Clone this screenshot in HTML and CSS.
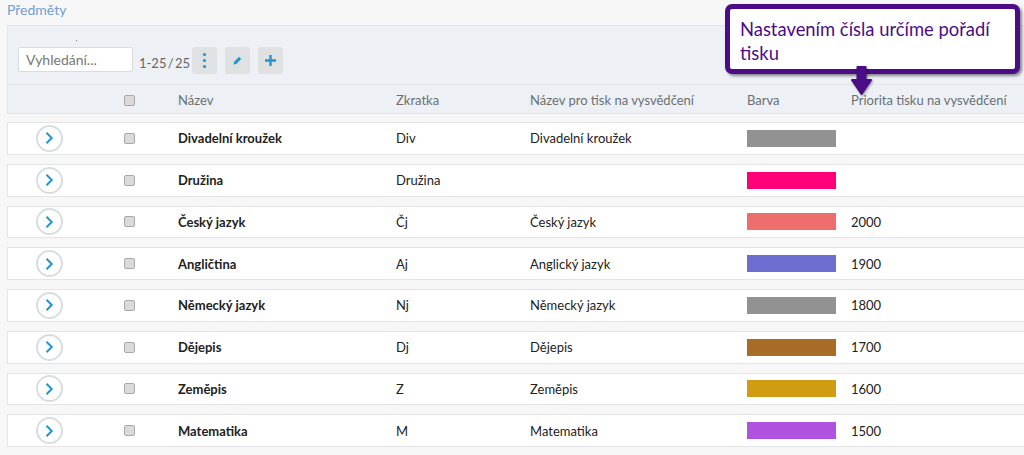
FILE: index.html
```html
<!DOCTYPE html>
<html lang="cs">
<head>
<meta charset="utf-8">
<title>Předměty</title>
<link rel="stylesheet" href="styles.css">
</head>
<body>
<main class="page">
  <h1 class="title">Předměty</h1>
  <section class="panel">
    <div class="toolbar">
      <span class="dot"></span>
      <div class="tools">
        <input class="search" type="text" placeholder="Vyhledání...">
        <span class="count">1-25 / 25</span>
        <button class="tool" aria-label="Menu"><svg width="25" height="27" viewBox="0 0 25 27"><g fill="#2196d3"><circle cx="12.500" cy="7.500" r="1.600"/><circle cx="12.500" cy="13.500" r="1.600"/><circle cx="12.500" cy="19.500" r="1.600"/></g></svg></button>
        <button class="tool" aria-label="Upravit"><svg width="25" height="27" viewBox="0 0 25 27"><path d="M8.500 17.500l.6-2.700 5-5 2.100 2.100-5 5z" fill="#2196d3"/></svg></button>
        <button class="tool" aria-label="Přidat"><svg width="25" height="27" viewBox="0 0 25 27"><path d="M12.500 8v11M7 13.500h11" stroke="#2196d3" stroke-width="2.400" fill="none"/></svg></button>
      </div>
    </div>
    <div class="cols head">
      <span></span>
      <span><input class="check" type="checkbox"></span>
      <span>Název</span>
      <span>Zkratka</span>
      <span>Název pro tisk na vysvědčení</span>
      <span>Barva</span>
      <span>Priorita tisku na vysvědčení</span>
    </div>
  </section>
  <div class="rows">
    <div class="cols row"><span><button class="open" aria-label="Otevřít"><svg width="12" height="14" viewBox="0 0 12 14"><path d="M3.500 1.800L8.700 7l-5.200 5.200" fill="none" stroke="#2196d3" stroke-width="2"/></svg></button></span><span><input class="check" type="checkbox"></span><b>Divadelní kroužek</b><span>Div</span><span>Divadelní kroužek</span><span class="swatch c1"></span><span></span></div>
    <div class="cols row"><span><button class="open" aria-label="Otevřít"><svg width="12" height="14" viewBox="0 0 12 14"><path d="M3.500 1.800L8.700 7l-5.200 5.200" fill="none" stroke="#2196d3" stroke-width="2"/></svg></button></span><span><input class="check" type="checkbox"></span><b>Družina</b><span>Družina</span><span></span><span class="swatch c2"></span><span></span></div>
    <div class="cols row"><span><button class="open" aria-label="Otevřít"><svg width="12" height="14" viewBox="0 0 12 14"><path d="M3.500 1.800L8.700 7l-5.200 5.200" fill="none" stroke="#2196d3" stroke-width="2"/></svg></button></span><span><input class="check" type="checkbox"></span><b>Český jazyk</b><span>Čj</span><span>Český jazyk</span><span class="swatch c3"></span><span>2000</span></div>
    <div class="cols row"><span><button class="open" aria-label="Otevřít"><svg width="12" height="14" viewBox="0 0 12 14"><path d="M3.500 1.800L8.700 7l-5.200 5.200" fill="none" stroke="#2196d3" stroke-width="2"/></svg></button></span><span><input class="check" type="checkbox"></span><b>Angličtina</b><span>Aj</span><span>Anglický jazyk</span><span class="swatch c4"></span><span>1900</span></div>
    <div class="cols row"><span><button class="open" aria-label="Otevřít"><svg width="12" height="14" viewBox="0 0 12 14"><path d="M3.500 1.800L8.700 7l-5.200 5.200" fill="none" stroke="#2196d3" stroke-width="2"/></svg></button></span><span><input class="check" type="checkbox"></span><b>Německý jazyk</b><span>Nj</span><span>Německý jazyk</span><span class="swatch c1"></span><span>1800</span></div>
    <div class="cols row"><span><button class="open" aria-label="Otevřít"><svg width="12" height="14" viewBox="0 0 12 14"><path d="M3.500 1.800L8.700 7l-5.200 5.200" fill="none" stroke="#2196d3" stroke-width="2"/></svg></button></span><span><input class="check" type="checkbox"></span><b>Dějepis</b><span>Dj</span><span>Dějepis</span><span class="swatch c5"></span><span>1700</span></div>
    <div class="cols row"><span><button class="open" aria-label="Otevřít"><svg width="12" height="14" viewBox="0 0 12 14"><path d="M3.500 1.800L8.700 7l-5.200 5.200" fill="none" stroke="#2196d3" stroke-width="2"/></svg></button></span><span><input class="check" type="checkbox"></span><b>Zeměpis</b><span>Z</span><span>Zeměpis</span><span class="swatch c6"></span><span>1600</span></div>
    <div class="cols row"><span><button class="open" aria-label="Otevřít"><svg width="12" height="14" viewBox="0 0 12 14"><path d="M3.500 1.800L8.700 7l-5.200 5.200" fill="none" stroke="#2196d3" stroke-width="2"/></svg></button></span><span><input class="check" type="checkbox"></span><b>Matematika</b><span>M</span><span>Matematika</span><span class="swatch c7"></span><span>1500</span></div>
  </div>
  <aside class="callout">
    <p class="callout-box">Nastavením čísla určíme pořadí tisku</p>
    <svg class="callout-arrow" width="28" height="34" viewBox="0 0 28 34"><path d="M9.500 1h8v13h5.500L13.500 28 4 14h5.500z" fill="#4b0c86" stroke="#4b0c86" stroke-width="2" stroke-linejoin="round"/></svg>
  </aside>
</main>
</body>
</html>
```
FILE: styles.css
```css
* { box-sizing: border-box; }
html, body { margin: 0; height: 455px; overflow: hidden; }
body { background: #f7f7f7; font-family: "Lato", "Liberation Sans", sans-serif; font-size: 13px; color: #222; }
.page { position: relative; padding: 2px 0 0 7px; width: 1024px; }
.title { margin: 0 0 7px; font-size: 14px; font-weight: 400; line-height: 16px; color: #6f9ed2; }
.panel { background: #edf1f6; border: 1px solid #e2e5e8; border-right: 0; }
.toolbar { height: 59px; padding: 21px 0 0 10px; position: relative; border-bottom: 1px solid #e2e5e8; }
.dot { position: absolute; left: 68px; top: 14px; width: 1px; height: 1px; background: #777; }
.tools { display: flex; align-items: flex-start; }
.search { width: 115px; height: 25px; padding: 0 7px; border: 1px solid #d9dcdf; border-radius: 2px; background: #fff; font: 14px "Lato", sans-serif; color: #777; }
.search::placeholder { color: #777; opacity: 1; }
.count { margin: 8px 2px 0 6px; color: #666; font-size: 13px; white-space: nowrap; word-spacing: -2px; }
.tool { width: 25px; height: 27px; margin: 0 8px 0 0; padding: 0; border: 0; border-radius: 3px; background: #dfe1e3; display: block; }
.tool svg { display: block; }
.cols { display: grid; grid-template-columns: 82px 88px 218px 134px 217px 104px 1fr; align-items: center; }
.head { height: 28px; padding-top: 2px; color: #6b6f73; font-size: 13px; }
.rows { margin-top: 8px; }
.row { height: 32.750px; margin-bottom: 9px; background: #fff; border: 1px solid #e4e4e4; border-right: 0; }
.row b { font-weight: 700; color: #222; }
.head > :first-child, .row > :first-child { display: flex; justify-content: center; }
.check { display: block; margin: 0 0 0 34px; width: 11px; height: 11px; appearance: none; background: #dadada; border: 1px solid #a9a9a9; border-radius: 2px; }
.open { width: 27px; height: 27px; padding: 0; border: 2px solid #d8dde0; border-radius: 50%; background: #fff; display: flex; align-items: center; justify-content: center; }
.swatch { display: block; width: 89px; height: 17px; }
.c1 { background: #929292; }
.c2 { background: #ff0078; }
.c3 { background: #ee6e6e; }
.c4 { background: #6e6ed2; }
.c5 { background: #a86c26; }
.c6 { background: #d09c12; }
.c7 { background: #b052e0; }
.callout { position: absolute; left: 725px; top: 4px; width: 295px; }
.callout-box { margin: 0; height: 70px; padding: 8px 10px 0; border: 5px solid #4b0c86; border-radius: 7px; background: #fff; color: #4b0c86; font-size: 18.400px; line-height: 24px; box-shadow: 2px 2px 3px rgba(0,0,0,.45); }
.callout-arrow { position: absolute; left: 123px; top: 62px; filter: drop-shadow(1px 1px 1px rgba(0,0,0,.4)); }
```
